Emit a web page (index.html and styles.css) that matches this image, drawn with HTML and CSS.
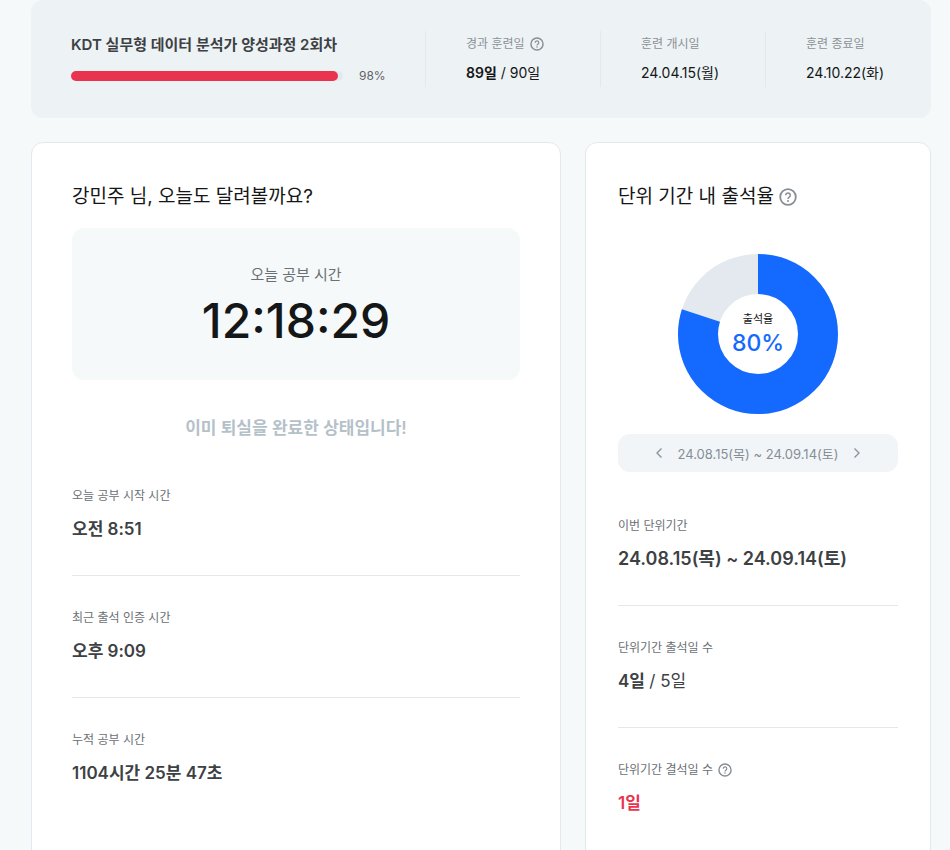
FILE: index.html
```
<!DOCTYPE html>
<html lang="ko">

<head>
    <meta charset="UTF-8">
    <meta name="viewport" content="width=device-width, initial-scale=1.0">
    <title>출석 현황</title>
    <link rel="stylesheet" href="styles.css">
</head>

<body>
    <!-- 도움말 아이콘 -->
    <svg class="sprite" aria-hidden="true">
        <symbol id="icon-help" viewBox="0 0 18 18">
            <circle cx="9" cy="9" r="7.8" fill="none" stroke="currentColor" stroke-width="1.8" />
            <path d="M6.7 7.3a2.3 2.2 0 1 1 3.6 1.7c-.8.6-1.3 1-1.3 1.9" fill="none" stroke="currentColor" stroke-width="1.5" />
            <circle cx="9" cy="12.9" r="1" fill="currentColor" />
        </symbol>
    </svg>

    <div class="page">
        <!-- 과정 정보 -->
        <header class="course">
            <div class="course-main">
                <h1 class="course-name">KDT 실무형 데이터 분석가 양성과정 2회차</h1>
                <div class="progress">
                    <div class="progress-bar">
                        <div class="progress-fill" style="width: 98%"></div>
                    </div>
                    <span class="progress-text">98%</span>
                </div>
            </div>
            <div class="course-info">
                <div class="info-label">경과 훈련일
                    <button type="button" class="help" aria-label="도움말"><svg><use href="#icon-help" /></svg></button>
                </div>
                <div class="info-value"><b>89일</b> / 90일</div>
            </div>
            <div class="course-info">
                <div class="info-label">훈련 개시일</div>
                <div class="info-value">24.04.15(월)</div>
            </div>
            <div class="course-info">
                <div class="info-label">훈련 종료일</div>
                <div class="info-value">24.10.22(화)</div>
            </div>
        </header>

        <main class="cards">
            <!-- 오늘 공부 시간 -->
            <section class="card card-study">
                <h2 class="card-title">강민주 님, 오늘도 달려볼까요?</h2>
                <div class="timer">
                    <div class="timer-label">오늘 공부 시간</div>
                    <div class="timer-value">12:18:29</div>
                </div>
                <p class="message">이미 퇴실을 완료한 상태입니다!</p>
                <dl class="list">
                    <div class="item">
                        <dt>오늘 공부 시작 시간</dt>
                        <dd>오전 8:51</dd>
                    </div>
                    <div class="item">
                        <dt>최근 출석 인증 시간</dt>
                        <dd>오후 9:09</dd>
                    </div>
                    <div class="item">
                        <dt>누적 공부 시간</dt>
                        <dd>1104시간 25분 47초</dd>
                    </div>
                </dl>
            </section>

            <!-- 단위 기간 출석율 -->
            <section class="card card-rate">
                <h2 class="card-title">단위 기간 내 출석율
                    <button type="button" class="help help-large" aria-label="도움말"><svg><use href="#icon-help" /></svg></button>
                </h2>
                <div class="donut">
                    <svg class="donut-chart" viewBox="0 0 160 160" aria-hidden="true">
                        <circle class="donut-track" cx="80" cy="80" r="60" />
                        <circle class="donut-fill" cx="80" cy="80" r="60" pathLength="100" stroke-dasharray="80 20" transform="rotate(-90 80 80)" />
                    </svg>
                    <div class="donut-text">
                        <span class="donut-label">출석율</span>
                        <span class="donut-value">80%</span>
                    </div>
                </div>
                <div class="pager">
                    <button type="button" class="pager-btn" aria-label="이전"><svg viewBox="0 0 16 16"><path d="M10.5 3.5 6 8l4.5 4.5" /></svg></button>
                    <span>24.08.15(목) ~ 24.09.14(토)</span>
                    <button type="button" class="pager-btn" aria-label="다음"><svg viewBox="0 0 16 16"><path d="M5.5 3.5 10 8l-4.5 4.5" /></svg></button>
                </div>
                <dl class="list">
                    <div class="item">
                        <dt>이번 단위기간</dt>
                        <dd class="period">24.08.15(목) ~ 24.09.14(토)</dd>
                    </div>
                    <div class="item">
                        <dt>단위기간 출석일 수</dt>
                        <dd>4일 <span class="total">/ 5일</span></dd>
                    </div>
                    <div class="item">
                        <dt>단위기간 결석일 수
                            <button type="button" class="help" aria-label="도움말"><svg><use href="#icon-help" /></svg></button>
                        </dt>
                        <dd class="absent">1일</dd>
                    </div>
                </dl>
            </section>
        </main>
    </div>
</body>

</html>
```
FILE: styles.css
```
* {
    box-sizing: border-box;
    margin: 0;
    padding: 0;
}

body {
    background: #f5f9fa;
    color: #141617;
    font-family: Inter, "Noto Sans CJK KR", sans-serif;
}

button {
    border: 0;
    background: none;
    cursor: pointer;
}

.sprite {
    display: none;
}

.page {
    padding: 0 19px 24px 31px;
}

/* 과정 정보 */
.course {
    display: grid;
    grid-template-columns: 1fr 175px 165px 166px;
    padding: 31px 0;
    background: #edf2f5;
    border-radius: 12px;
}

.course-main {
    padding: 0 40px;
}

.course-name {
    font-size: 15px;
    font-weight: 600;
    line-height: 28px;
    color: #3d4144;
    white-space: nowrap;
}

.progress {
    display: flex;
    align-items: center;
    gap: 16px;
    margin-top: 7px;
}

.progress-bar {
    flex: 1;
    height: 10px;
    border-radius: 5px;
    background: #e3e9f0;
}

.progress-fill {
    height: 100%;
    border-radius: 5px;
    background: #e9344f;
}

.progress-text {
    width: 26px;
    font-size: 12px;
    line-height: 20px;
    color: #5f6368;
}

.course-info {
    padding-left: 40px;
    border-left: 1px solid #e2e8ec;
}

.info-label,
.list dt {
    display: flex;
    align-items: center;
    gap: 5px;
    font-size: 12px;
    line-height: 18px;
}

.info-label {
    margin-top: 4px;
    color: #8b9196;
}

.info-value {
    margin-top: 10px;
    font-size: 14px;
    line-height: 20px;
    padding-bottom: 4px;
}

.info-value b {
    font-weight: 600;
}

.help {
    width: 14px;
    height: 14px;
    color: #868e96;
}

.help svg {
    display: block;
    width: 100%;
    height: 100%;
}

.help-large {
    width: 18px;
    height: 18px;
}

/* 카드 */
.cards {
    display: grid;
    grid-template-columns: 530fr 346fr;
    gap: 24px;
    margin-top: 24px;
}

.card {
    padding: 40px 40px 46px;
    background: #fff;
    border: 1px solid #e2e9ee;
    border-radius: 12px;
}

.card-rate {
    padding-left: 32px;
    padding-right: 32px;
}

.card-title {
    display: flex;
    align-items: center;
    gap: 5px;
    font-size: 19px;
    font-weight: 400;
    line-height: 28px;
}

.timer {
    margin-top: 17px;
    padding: 37px 0 31px;
    background: #f5f9fa;
    border-radius: 12px;
    text-align: center;
}

.timer-label {
    font-size: 15px;
    line-height: 20px;
    color: #6b7075;
}

.timer-value {
    margin-top: 8px;
    font-size: 48px;
    font-weight: 500;
    line-height: 56px;
}

.message {
    margin: 36px 0 14px;
    font-size: 17px;
    font-weight: 600;
    line-height: 24px;
    text-align: center;
    color: #b5c1c9;
}

.item {
    padding: 33px 0 34px;
    border-bottom: 1px solid #e5e8eb;
}

.item:last-child {
    padding-bottom: 0;
    border-bottom: 0;
}

.list dt {
    color: #6b7075;
}

.list dd {
    margin-top: 12px;
    font-size: 17px;
    font-weight: 600;
    line-height: 24px;
    color: #3d4144;
}

.list .period {
    font-size: 18px;
}

.list .total {
    font-weight: 400;
}

.list .absent {
    color: #e9344f;
}

/* 출석율 도넛 */
.donut {
    display: grid;
    place-items: center;
    margin: 43px 0 20px;
}

.donut-chart,
.donut-text {
    grid-area: 1 / 1;
}

.donut-chart {
    width: 160px;
    height: 160px;
    fill: none;
    stroke-width: 40;
}

.donut-track {
    stroke: #e3e9ee;
}

.donut-fill {
    stroke: #146aff;
}

.donut-text {
    display: flex;
    flex-direction: column;
    align-items: center;
}

.donut-label {
    font-size: 11px;
    line-height: 18px;
}

.donut-value {
    font-size: 23px;
    font-weight: 500;
    line-height: 30px;
    color: #146aff;
}

.pager {
    display: flex;
    align-items: center;
    justify-content: center;
    gap: 10px;
    height: 38px;
    margin-bottom: 12px;
    border-radius: 12px;
    background: #f1f5f8;
    font-size: 13px;
    color: #868e96;
}

.pager-btn {
    width: 16px;
    height: 16px;
}

.pager-btn svg {
    display: block;
    fill: none;
    stroke: #8b959c;
    stroke-width: 1.4;
}
```
